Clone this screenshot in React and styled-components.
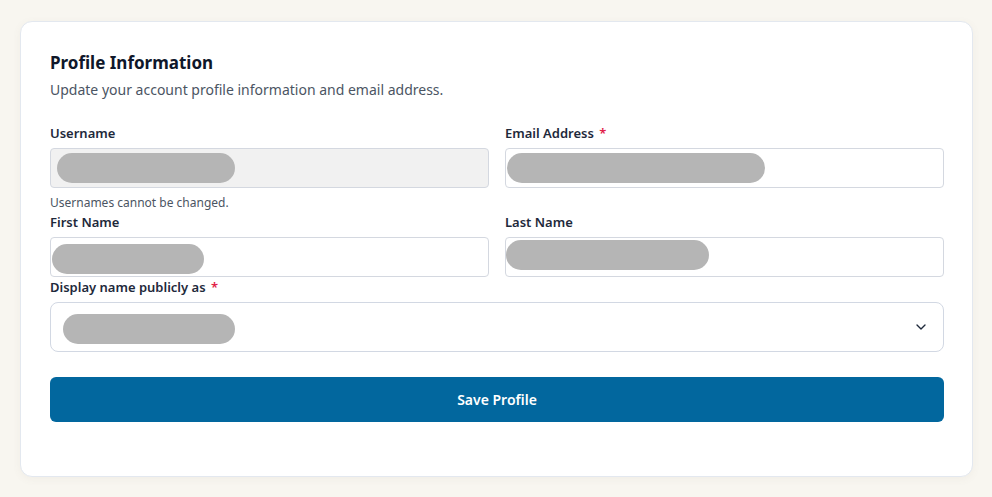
import React from 'react'
import styled, { createGlobalStyle } from 'styled-components'
import { ChevronDown } from 'lucide-react'

const GlobalStyle = createGlobalStyle`
  body {
    margin: 0;
    background: #f8f6f0;
    font-family: 'Noto Sans', 'Open Sans', Arial, sans-serif;
    color: #1e293b;
  }
`

const ProfileForm = () => {
  return (
    <Page>
      <GlobalStyle />
      <Card>
        <Header>
          <Title>Profile Information</Title>
          <Subtitle>Update your account profile information and email address.</Subtitle>
        </Header>

        <Row>
          <Field>
            <Label>Username</Label>
            <InputBox disabled>
              <Redacted width={178} offset={6} />
            </InputBox>
            <Hint>Usernames cannot be changed.</Hint>
          </Field>

          <Field>
            <Label>
              Email Address <Required>*</Required>
            </Label>
            <InputBox>
              <Redacted width={258} offset={1} />
            </InputBox>
          </Field>
        </Row>

        <Row>
          <Field>
            <Label>First Name</Label>
            <InputBox>
              <Redacted width={152} offset={1} shift={2} />
            </InputBox>
          </Field>

          <Field>
            <Label>Last Name</Label>
            <InputBox>
              <Redacted width={203} offset={0} shift={-2} />
            </InputBox>
          </Field>
        </Row>

        <Field>
          <Label>
            Display name publicly as <Required>*</Required>
          </Label>
          <SelectBox>
            <Redacted width={172} offset={12} shift={2} />
            <ChevronDown size={16} strokeWidth={2} color="#1e293b" />
          </SelectBox>
        </Field>

        <SaveButton>Save Profile</SaveButton>
      </Card>
    </Page>
  )
}

export default ProfileForm

const Page = styled.div`
  padding: 21px 19px 20px 20px;
`

const Card = styled.div`
  background: #fff;
  border: 1px solid #e3e8ef;
  border-radius: 12px;
  box-shadow: 0 2px 8px rgba(120, 110, 80, 0.06);
  padding: 29px 28px 54px 29px;
  display: flex;
  flex-direction: column;
`

const Header = styled.div`
  margin-bottom: 24px;
`

const Title = styled.h2`
  margin: 0;
  font-size: 17px;
  line-height: 24px;
  font-weight: 700;
  color: #0f172a;
`

const Subtitle = styled.p`
  margin: 5px 0 0;
  font-size: 14px;
  line-height: 20px;
  color: #4b5563;
`

const Row = styled.div`
  display: grid;
  grid-template-columns: 1fr 1fr;
  column-gap: 16px;
  align-items: start;
  margin-bottom: 1px;
`

const Field = styled.div`
  display: flex;
  flex-direction: column;
`

const Label = styled.label`
  font-size: 13px;
  line-height: 18px;
  font-weight: 600;
  color: #1e293b;
  margin-bottom: 6px;
`

const Required = styled.span`
  color: #e11d48;
  margin-left: 2px;
`

const InputBox = styled.div`
  height: 40px;
  box-sizing: border-box;
  display: flex;
  align-items: center;
  border: 1px solid #d4d8e0;
  border-radius: 4px;
  background: ${(p) => (p.disabled ? '#f1f1f1' : '#fff')};
`

const SelectBox = styled.div`
  height: 50px;
  box-sizing: border-box;
  display: flex;
  align-items: center;
  justify-content: space-between;
  padding-right: 14px;
  border: 1px solid #d2d8e3;
  border-radius: 8px;
  background: #fff;
`

const Redacted = styled.span`
  display: block;
  height: 30px;
  width: ${(p) => p.width}px;
  margin-left: ${(p) => p.offset}px;
  transform: translateY(${(p) => p.shift || 0}px);
  border-radius: 15px;
  background: #b5b5b5;
`

const Hint = styled.span`
  margin: 7px 0 1px;
  font-size: 12px;
  line-height: 16px;
  color: #4b5563;
`

const SaveButton = styled.button`
  margin-top: 25px;
  height: 45px;
  border: none;
  border-radius: 6px;
  background: #02679e;
  color: #fff;
  font-family: inherit;
  font-size: 14px;
  font-weight: 600;
  cursor: pointer;
`
